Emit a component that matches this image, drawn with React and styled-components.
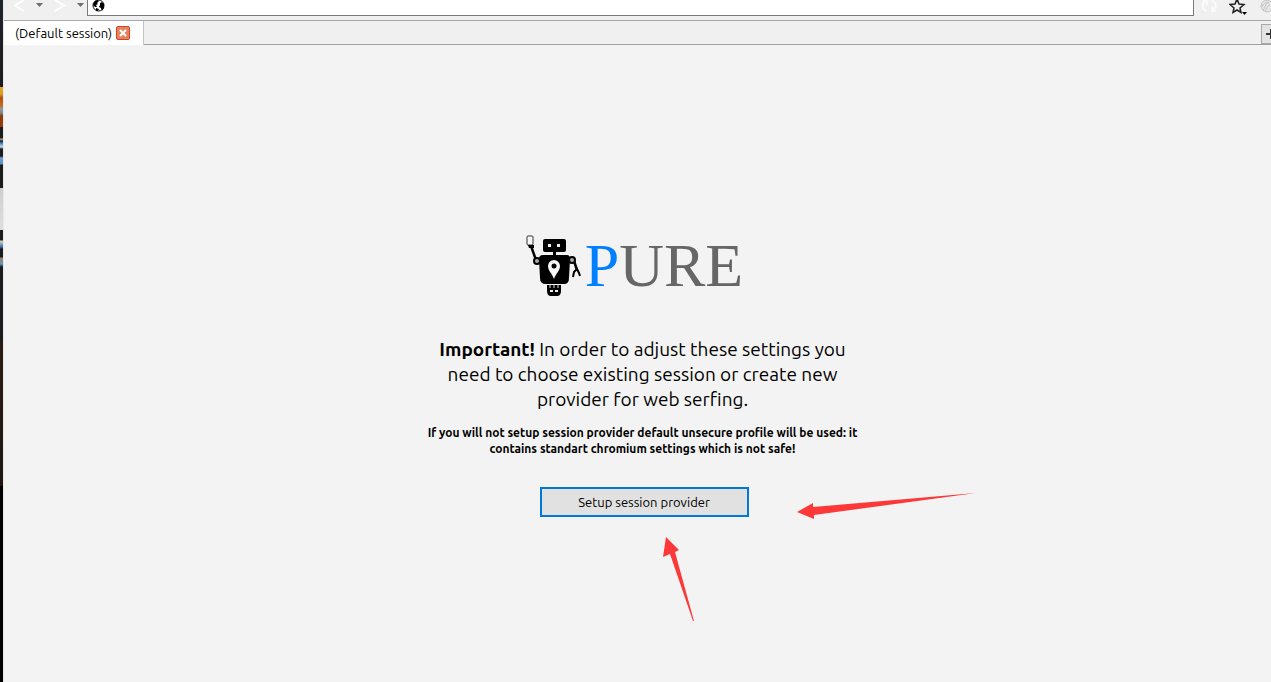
import React from "react";
import styled, { createGlobalStyle } from "styled-components";

const Global = createGlobalStyle`
  * { box-sizing: border-box; }
  body {
    margin: 0;
    background: #f3f3f3;
    color: #000;
    font-family: Ubuntu, "Noto Sans", "Open Sans", sans-serif;
    font-size: 13px;
  }
`;

const Screen = styled.div`
  display: flex;
  min-height: 100vh;
  overflow: hidden;
`;

const DesktopEdge = styled.div`
  flex: 0 0 3px;
  background: linear-gradient(
    #20242b 0, #1b1c1e 87px, #e0a526 87px, #d9a21c 94px, #b05012 98px,
    #c8701c 106px, #8a9cb0 109px, #7d878f 113px, #8e3a08 116px, #9a3c06 127px,
    #1b1c1e 127px, #1b1c1e 138px, #b8b48a 139px, #1b1c1e 141px, #3b7cc0 143px,
    #c8dcec 147px, #1b1c1e 149px, #1b1c1e 156px, #6fa0d0 158px, #5a8fc4 164px,
    #1b1c1e 165px, #1b1c1e 188px, #cfcfcf 188px, #dedede 230px, #1b1c1e 230px,
    #1b1c1e 240px, #d4dcc0 241px, #3c6ca8 247px, #1b1c1e 249px, #1b1c1e 257px,
    #9a8060 258px, #6a94c0 264px, #1b1c1e 267px, #1b1c1e 336px, #2a1d14 350px,
    #20160f 486px, #000 486px, #000 100%
  );
`;

const Window = styled.main`
  flex: 1;
  min-width: 0;
  border-left: 1px solid #e8e8e8;
`;

const Toolbar = styled.header`
  display: flex;
  height: 21px;
  background: #f0f0f0;
  border-bottom: 1px solid #a8a8a8;
  overflow: hidden;
`;

const ToolButton = styled.button`
  flex: 0 0 ${(p) => p.$width}px;
  height: 16px;
  padding: 0;
  border: 0;
  background: none;
  text-align: left;
  svg { display: block; }
`;

const Address = styled.label`
  display: flex;
  flex: 1;
  height: 16px;
  padding-left: 4px;
  background: #fff;
  border: solid #7a7a7a;
  border-width: 0 1px 1px;
  svg { flex: none; }
`;

const AddressInput = styled.input`
  flex: 1;
  min-width: 0;
  padding: 0 4px;
  border: 0;
  outline: 0;
  background: none;
  font: inherit;
`;

const Actions = styled.div`
  display: flex;
  flex: 0 0 77px;
  padding-left: 6px;
`;

const TabBar = styled.nav`
  display: flex;
  justify-content: space-between;
  height: 24px;
  background: #f0f0f0;
  box-shadow: inset 0 -1px #a0a0a0;
`;

const Tab = styled.div`
  display: flex;
  align-items: center;
  gap: 4px;
  padding: 0 13px 0 11px;
  background: #fff;
  border-right: 1px solid #c4c4c4;
  white-space: nowrap;
`;

const CloseButton = styled.button`
  width: 14px;
  height: 14px;
  padding: 0;
  border: 1px solid #d8402c;
  border-radius: 2px;
  background: #e0855c;
  svg { display: block; }
`;

const AddTab = styled.button`
  width: 10px;
  height: 20px;
  margin-top: 3px;
  padding: 0;
  overflow: hidden;
  border: 1px solid #a8a8a8;
  border-right: 0;
  background: #e3e3e3;
`;

const Panel = styled.section`
  display: flex;
  flex-direction: column;
  align-items: center;
  padding: 184px 0 32px 10px;
  text-align: center;
`;

const Logo = styled.div`
  display: flex;
  align-items: center;
  gap: 4px;
  height: 72px;
  padding-right: 16px;
  svg { flex: none; margin-top: 2px; }
`;

const Brand = styled.h1`
  margin: 0;
  color: #666;
  font: 400 62px/68px "Liberation Serif", serif;
`;

const BrandInitial = styled.span`
  color: #0080ff;
`;

const Notice = styled.p`
  width: 450px;
  max-width: 100%;
  margin: 36px 0 0;
  font-size: 19px;
  line-height: 25px;
`;

const Warning = styled.p`
  margin: 13px 0 0;
  font-size: 12px;
  font-weight: 700;
  line-height: 16px;
`;

const Action = styled.div`
  position: relative;
  margin: 30px 0 0 3px;
`;

const SetupButton = styled.button`
  display: block;
  width: 209px;
  height: 30px;
  border: 2px solid #0078d7;
  background: #e1e1e1;
  color: #000;
  font: inherit;
`;

const Arrows = styled.svg`
  position: absolute;
  top: 0;
  left: 0;
  pointer-events: none;
`;

const Nav = ({ label, forward }) => (
  <ToolButton $width={forward ? 43 : 40} aria-label={label}>
    <svg width="40" height="16">
      <path
        d={forward ? "M11 0 20 5.500 11 11" : "M20 0 11 5.500 20 11"}
        fill="none" stroke="#fff" strokeWidth="2"
      />
      <path d={forward ? "M33 3h7l-3.500 4z" : "M32 3h7l-3.500 4z"} fill="#6d6d6d" />
    </svg>
  </ToolButton>
);

const Robot = () => (
  <svg width="55" height="62" viewBox="0 0 55 62" aria-hidden="true">
    <rect x="1" y="1" width="6" height="9" rx="1" fill="#f8f8f8" stroke="#333" />
    <path d="M2 10h6v3H3z" />
    <path d="M5 11 10 25M48 26l3 9" fill="none" stroke="#000" strokeWidth="2.500" />
    <circle cx="11" cy="26" r="3" fill="#aaa" stroke="#000" strokeWidth="2" />
    <circle cx="46" cy="25" r="3" fill="#aaa" stroke="#000" strokeWidth="2" />
    <path d="M47 42l1-5 3-3 2 4 1 3" fill="none" stroke="#000" strokeWidth="2" />
    <rect x="17" y="4" width="23" height="13" rx="2" />
    <path d="M22 9h3v3h-3zM31 9h3v3h-3z" fill="#eee" />
    <path d="M27 17h3v4h-3z" />
    <path d="M17 20h24q3 0 3 4l-1 19q0 6-5 6H20q-6 0-6-6l-1-19q0-4 4-4z" />
    <path d="M28 44c-2-6-6-8-6-13a6 6 0 0 1 12 0c0 5-4 7-6 13z" fill="#f7f7f7" />
    <circle cx="28" cy="31" r="2.500" />
    <path d="M21 50h14v6q0 5-4 5h-6q-4 0-4-5z" />
    <path d="M24 50v3M28 50v3M32 50v3" stroke="#ddd" />
    <path d="M24 55h3v2h-3zM29 55h3v2h-3z" fill="#eee" />
  </svg>
);

export default function App() {
  return (
    <>
      <Global />
      <Screen>
        <DesktopEdge />
        <Window>
          <Toolbar>
            <Nav label="Back" />
            <Nav label="Forward" forward />
            <Address>
              <svg width="13" height="13" viewBox="0 0 13 13" aria-hidden="true">
                <circle cx="6.500" cy="5.500" r="5.500" fill="#fff" stroke="#000" />
                <path d="M1 4 3 1 6 0 7 1 5 3 6 4 4 5 5 7 3 7 1 5zM8 3l2-1 2 2v4l-2 3-1-3-2-1 1-2zM4 8l3 1-1 2H4z" />
              </svg>
              <AddressInput aria-label="Address" />
            </Address>
            <Actions>
              <ToolButton $width={29} aria-label="Reload">
                <svg width="24" height="16" fill="none" stroke="#fafafa" strokeWidth="2">
                  <path d="M6 11C1 8 2 2 6 1M3 1h4v4M11 0c6 2 6 8 1 11M16 11h-4V7" />
                </svg>
              </ToolButton>
              <ToolButton $width={29} aria-label="Bookmarks">
                <svg width="22" height="16">
                  <path d="m8-1 2 5 5 .5-4 3.500 1 4.500-4-2.500-4 2.500L5 8 1 4.500 6 4z" fill="#f0f0f0" stroke="#222" strokeWidth="1.500" />
                  <path d="M13 12h5l-2.500 3z" />
                </svg>
              </ToolButton>
              <ToolButton $width={13} aria-label="Identity">
                <svg width="13" height="16" fill="none" stroke="#c4c4c4">
                  <circle cx="9" cy="6" r="6" fill="#e6e6e6" />
                  <path d="M5 10c3-3 1-6 6-7M7 11c3-3 1-5 5-6M4 7c1-3 3-5 7-5" />
                </svg>
              </ToolButton>
            </Actions>
          </Toolbar>
          <TabBar>
            <Tab>
              (Default session)
              <CloseButton aria-label="Close tab">
                <svg width="12" height="12"><path d="m3 3 6 6m0-6-6 6" stroke="#fff" strokeWidth="2" /></svg>
              </CloseButton>
            </Tab>
            <AddTab aria-label="New tab">
              <svg width="9" height="18"><path d="M4 9h10M9 4v10" stroke="#333" strokeWidth="2" /></svg>
            </AddTab>
          </TabBar>
          <Panel>
            <Logo>
              <Robot />
              <Brand><BrandInitial>P</BrandInitial>URE</Brand>
            </Logo>
            <Notice>
              <b>Important!</b> In order to adjust these settings you<br />
              need to choose existing session or create new<br />
              provider for web serfing.
            </Notice>
            <Warning>
              If you will not setup session provider default unsecure profile will be used: it<br />
              contains standart chromium settings which is not safe!
            </Warning>
            <Action>
              <SetupButton>Setup session provider</SetupButton>
              <Arrows width="440" height="140" fill="#fd3838" aria-hidden="true">
                <path d="m257 25 16-9v4L436 6 274 28v4z" />
                <path d="m126 50 13 13-4 2 19 69-1 0L130 67l-7 3z" />
              </Arrows>
            </Action>
          </Panel>
        </Window>
      </Screen>
    </>
  );
}
